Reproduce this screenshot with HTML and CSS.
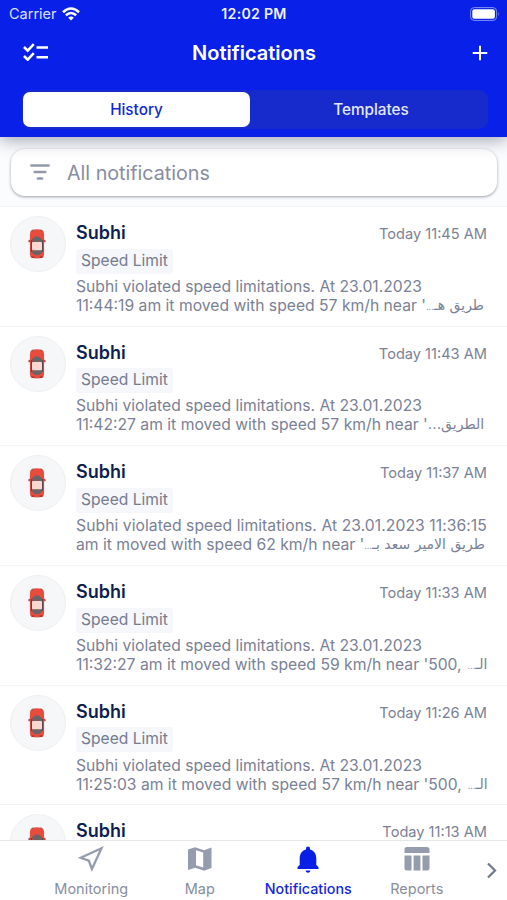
FILE: index.html
```html
<!DOCTYPE html>
<html lang="en">
<head>
<meta charset="utf-8">
<meta name="viewport" content="width=device-width, initial-scale=1">
<title>Notifications</title>
<link rel="stylesheet" href="styles.css">
</head>
<body>
<svg class="defs" width="0" height="0" aria-hidden="true">
  <symbol id="car" viewBox="0 0 18 30">
    <path d="M0.300 11.5 3 10v3l-2.500.2zM17.700 11.5 15 10v3l2.500.2z" fill="#c8403a"/>
    <path d="M4.500 .8Q9-.2 13.500 .8q2.600 1 2.600 4.200v20q0 3.300-2.200 4-4.900.9-9.800 0-2.200-.7-2.200-4V5Q1.900 1.800 4.500 .8z" fill="#e94b3d"/>
    <path d="M3.500 1.800 5.500 1M14.500 1.800 12.500 1" stroke="#806461" stroke-width="1"/>
    <path d="M4 10q5-5.500 10 0l-.8 4H4.800zM4.800 21h8.400l.8 3q-5 4.500-10 0z" fill="#6c6365"/>
    <path d="M3.500 11v12M14.500 11v12" stroke="#5a4a4d" stroke-width="1.300"/>
    <rect x="4" y="13" width="10" height="8.300" rx="1" fill="#fbd9d2"/>
    <path d="M3.500 28.200h3M11.500 28.200h3" stroke="#9e302b" stroke-width="1.200"/>
  </symbol>
</svg>
<div class="app">
  <header class="header">
    <div class="status">
      <div class="carrier"><span>Carrier</span>
        <svg width="18" height="14" viewBox="0 0 18 14" fill="none" stroke="#fff" stroke-width="2.600"><path d="M1 5.200Q9-2.200 17 5.200M3.900 8.300q5.100-4.600 10.200 0"/><path d="M9 13.500 6.200 10.700q2.800-2.500 5.600 0z" fill="#fff" stroke="none"/></svg>
      </div>
      <span class="clock">12:02 PM</span>
      <svg class="battery" width="30" height="14" viewBox="0 0 30 14"><rect x=".6" y=".6" width="26" height="12.800" rx="3.600" fill="none" stroke="#8190f5"/><rect x="2.300" y="2.300" width="22.600" height="9.400" rx="2" fill="#fff"/><path d="M28 4.800q1.600 2.200 0 4.400z" fill="#8190f5"/></svg>
    </div>
    <div class="titlebar">
      <svg width="26" height="18" viewBox="0 0 26 18" fill="none" stroke="#fff" stroke-width="2.500"><path d="m1 4 3.700 3.700L10.800 1.200M1 13l3.700 3.700 6.100-6.500M13.500 4.500H25M13.500 14.200H25"/></svg>
      <h1>Notifications</h1>
      <svg width="16" height="16" viewBox="0 0 16 16" stroke="#fff" stroke-width="2"><path d="M8 .7v14.600M.7 8h14.600"/></svg>
    </div>
    <div class="tabs"><div class="tab active">History</div><div class="tab">Templates</div></div>
  </header>
  <div class="filter">
    <div class="field">
      <svg width="20" height="16" viewBox="0 0 20 16" stroke="#9299ae" stroke-width="2.700" stroke-linecap="round"><path d="M1.500 1.500h17M4.800 8h10.400M8 14.500h4"/></svg>
      <span>All notifications</span>
    </div>
  </div>
  <main class="list">
    <article class="row">
      <div class="avatar"><svg width="18" height="30"><use href="#car"/></svg></div>
      <div class="content">
        <div class="top"><h2>Subhi</h2><time>Today 11:45 AM</time></div>
        <span class="tag">Speed Limit</span>
        <p><span class="line">Subhi violated speed limitations. At 23.01.2023</span><span class="line split"><span>11:44:19 am it moved with speed 57 km/h near '</span><bdi class="ar" dir="rtl">طريق هـ<span class="dots">...</span></bdi></span></p>
      </div>
    </article>
    <article class="row">
      <div class="avatar"><svg width="18" height="30"><use href="#car"/></svg></div>
      <div class="content">
        <div class="top"><h2>Subhi</h2><time>Today 11:43 AM</time></div>
        <span class="tag">Speed Limit</span>
        <p><span class="line">Subhi violated speed limitations. At 23.01.2023</span><span class="line split"><span>11:42:27 am it moved with speed 57 km/h near '</span><bdi class="ar" dir="rtl">الطريق...</bdi></span></p>
      </div>
    </article>
    <article class="row">
      <div class="avatar"><svg width="18" height="30"><use href="#car"/></svg></div>
      <div class="content">
        <div class="top"><h2>Subhi</h2><time>Today 11:37 AM</time></div>
        <span class="tag">Speed Limit</span>
        <p><span class="line wide">Subhi violated speed limitations. At 23.01.2023 11:36:15</span><span class="line split"><span>am it moved with speed 62 km/h near '</span><bdi class="ar" dir="rtl">طريق الامير سعد بـ<span class="dots">...</span></bdi></span></p>
      </div>
    </article>
    <article class="row">
      <div class="avatar"><svg width="18" height="30"><use href="#car"/></svg></div>
      <div class="content">
        <div class="top"><h2>Subhi</h2><time>Today 11:33 AM</time></div>
        <span class="tag">Speed Limit</span>
        <p><span class="line">Subhi violated speed limitations. At 23.01.2023</span><span class="line split spaced"><span>11:32:27 am it moved with speed 59 km/h near '500,</span><bdi class="ar" dir="rtl">الـ<span class="dots">...</span></bdi></span></p>
      </div>
    </article>
    <article class="row">
      <div class="avatar"><svg width="18" height="30"><use href="#car"/></svg></div>
      <div class="content">
        <div class="top"><h2>Subhi</h2><time>Today 11:26 AM</time></div>
        <span class="tag">Speed Limit</span>
        <p><span class="line">Subhi violated speed limitations. At 23.01.2023</span><span class="line split spaced"><span>11:25:03 am it moved with speed 57 km/h near '500,</span><bdi class="ar" dir="rtl">الـ<span class="dots">...</span></bdi></span></p>
      </div>
    </article>
    <article class="row">
      <div class="avatar"><svg width="18" height="30"><use href="#car"/></svg></div>
      <div class="content">
        <div class="top"><h2>Subhi</h2><time>Today 11:13 AM</time></div>
      </div>
    </article>
  </main>
  <nav class="nav">
    <div class="item"><svg width="26" height="26" viewBox="0 0 26 26" fill="none" stroke="#949cad" stroke-width="2.300"><path d="M23.500 2.200 2.800 11.800l8 2.900 3.100 8.300z"/></svg><span>Monitoring</span></div>
    <div class="item"><svg width="26" height="26" viewBox="0 0 26 26"><path d="m1 3.500 7-2.300 9 3 7.500-2.800V22l-7.300 2.700-9-3L1 24z" fill="#949cad"/><path d="m9 4.200 7.200 2.400v15L9 19.200z" fill="#fff"/></svg><span>Map</span></div>
    <div class="item current"><svg width="26" height="28" viewBox="0 0 26 28" fill="#0820e5"><path d="M11 2.600a2 2 0 0 1 4 0v.8c4.300 1 6.300 4.600 6.300 9.100v6.600l2.200 2V23h-21v-1.900l2.200-2v-6.600c0-4.500 2-8.100 6.300-9.100zM10.500 24.500h5q-.4 2.300-2.500 2.300t-2.500-2.300z"/></svg><span>Notifications</span></div>
    <div class="item"><svg width="26" height="26" viewBox="0 0 26 26" fill="#949cad"><path d="M.5 7V3.500q0-2.500 2.500-2.500h20q2.500 0 2.500 2.500V7zM.5 9.500h7v15H3Q.5 24.500.5 22zM9.600 9.500h6.800v15H9.600zM18.500 9.500h7V22q0 2.500-2.500 2.500h-4.500z"/></svg><span>Reports</span></div>
    <svg class="more" width="12" height="17" viewBox="0 0 12 17" fill="none" stroke="#737b8e" stroke-width="2.300"><path d="m2 1.500 7 7-7 7"/></svg>
  </nav>
</div>
</body>
</html>
```
FILE: styles.css
```css
* { box-sizing: border-box; }
body { margin: 0; background: #fff; font-family: Inter, "Noto Sans", "DejaVu Sans", sans-serif; }
h1, h2, p { margin: 0; }
svg { display: block; flex: none; }
.defs { position: absolute; }
.app { width: 507px; height: 900px; display: flex; flex-direction: column; overflow: hidden; }

.header { flex: none; height: 137px; background: #0820e8; color: #fff; position: relative; z-index: 2; box-shadow: 0 3px 16px rgba(30, 40, 70, .42); }
.status { height: 28px; padding: 0 7px 0 9px; display: grid; grid-template-columns: 1fr auto 1fr; align-items: center; font-size: 14px; line-height: 28px; }
.carrier { display: flex; gap: 6px; align-items: center; color: #dce0ff; font-size: 14.5px; }
.carrier svg { margin: -1px 0 0 -1px; }
.clock { font-weight: 600; font-size: 14.2px; letter-spacing: .25px; color: #eef0ff; margin-right: 1px; }
.battery { justify-self: end; margin-top: -1px; }
.titlebar { height: 49px; padding: 0 19px 0 20px; display: grid; grid-template-columns: 1fr auto 1fr; align-items: center; }
.titlebar > :first-child { margin: -2px 0 0 3px; }
.titlebar > :last-child { justify-self: end; }
h1 { font-size: 20px; font-weight: 600; line-height: 28px; }
.tabs { display: flex; height: 39px; margin: 13px 19px 0 22px; padding: 2px 0 2px 1px; background: #172bcd; border-radius: 9px; }
.tab { flex: 1; display: grid; place-items: center; padding-left: 4px; font-size: 15.3px; font-weight: 500; border-radius: 7px; color: #e5e8ff; }
.tab.active { flex: 0 0 227px; padding-left: 0; background: #fff; color: #1028d5; }

.filter { flex: none; height: 70px; padding: 12px 10px 11px 11px; background: #fbfcfe; border-bottom: 1px solid #f2f3f6; }
.field { height: 47px; padding: 0 19px; display: flex; align-items: center; gap: 17px; border-radius: 14px; background: #fff; box-shadow: 0 1px 3px rgba(40, 45, 65, .45); color: #868ca2; font-size: 19.7px; }
.field svg { margin-top: -2px; }

.list { flex: 1; min-height: 0; overflow: hidden; }
.row { height: 119.7px; padding: 9px 20px 0 10px; display: flex; gap: 10px; border-bottom: 1px solid #f3f4f6; }
.avatar { flex: none; width: 56px; height: 56px; display: grid; place-items: center; padding-right: 2px; border: 1px solid #edeff1; border-radius: 50%; background: #f5f7f9; }
.content { flex: 1; min-width: 0; padding-top: .5px; }
.top { height: 32px; display: flex; justify-content: space-between; align-items: center; }
h2 { font-size: 18px; font-weight: 600; color: #0d1e50; }
time { font-size: 14.6px; color: #7b8194; padding-top: 3px; }
.tag { display: block; width: 97px; height: 25px; padding-left: 5px; line-height: 24px; border-radius: 3px; background: #f5f7fa; color: #747c8f; font-size: 15.6px; white-space: nowrap; }
p { padding-top: 3.3px; font-size: 15.7px; line-height: 19px; color: #7a8195; }
.line { display: block; height: 19px; white-space: nowrap; }
.wide { letter-spacing: .06px; }
.split { display: flex; }
.spaced { gap: 6px; }
.ar { font-family: "DejaVu Sans", sans-serif; font-size: 14px; }
.dots { font-size: 8px; }

.nav { flex: none; height: 60px; padding: 5px 0 0 37px; display: flex; border-top: 1px solid #e5e7ea; background: #fff; position: relative; }
.item { width: 108.5px; display: flex; flex-direction: column; align-items: center; color: #878e9e; font-size: 14.5px; line-height: 18px; }
.item span { margin-top: auto; margin-bottom: 2px; }
.current { color: #1028e0; font-weight: 500; font-size: 14.3px; }
.more { margin: 16px 0 0 15px; }
```
